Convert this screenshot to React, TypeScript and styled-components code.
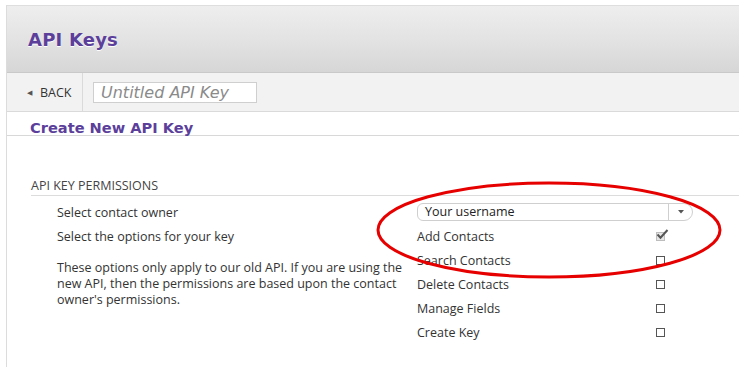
import { FC } from 'react';
import styled, { createGlobalStyle } from 'styled-components';

const GlobalStyle = createGlobalStyle`
	html, body {
		margin: 0;
		padding: 0;
		background: #fff;
		font-family: 'Open Sans', 'Liberation Sans', sans-serif;
		color: #333;
	}
`;

const leftRows = ['Select contact owner', 'Select the options for your key'];

const options = [
	{ label: 'Add Contacts', checked: true },
	{ label: 'Search Contacts', checked: false },
	{ label: 'Delete Contacts', checked: false },
	{ label: 'Manage Fields', checked: false },
	{ label: 'Create Key', checked: false },
];

const App: FC = () => {
	return (
		<>
			<GlobalStyle />
			<Frame>
				<Header>
					<Title>API Keys</Title>
				</Header>
				<Toolbar>
					<BackButton>
						<Caret>◀</Caret>
						BACK
					</BackButton>
					<KeyInput placeholder="Untitled API Key" />
				</Toolbar>
				<SectionTitle>Create New API Key</SectionTitle>
				<Permissions>
					<Heading>API Key Permissions</Heading>
					<Columns>
						<LeftColumn>
							{leftRows.map((row) => (
								<Row key={row}>{row}</Row>
							))}
							<Note>
								These options only apply to our old API. If you are using the new API, then the permissions are based upon the contact
								owner's permissions.
							</Note>
						</LeftColumn>
						<RightColumn>
							<Row>
								<Select>
									<SelectValue>Your username</SelectValue>
									<SelectArrow>
										<svg width="6" height="4" viewBox="0 0 6 4">
											<path d="M0 0h6L3 3.5z" fill="#555" />
										</svg>
									</SelectArrow>
								</Select>
							</Row>
							{options.map((option) => (
								<OptionRow key={option.label}>
									{option.label}
									<CheckBox $checked={option.checked}>
										{option.checked && (
											<svg width="13" height="11" viewBox="0 0 13 11">
												<path d="M1.5 5.5l3 3.2L11.5 1" fill="none" stroke="#555" strokeWidth="2" />
											</svg>
										)}
									</CheckBox>
								</OptionRow>
							))}
						</RightColumn>
					</Columns>
				</Permissions>
				<Highlight width="739" height="367" viewBox="0 0 739 367">
					<ellipse cx="549" cy="230" rx="171" ry="47" fill="none" stroke="#e60000" strokeWidth="3" />
				</Highlight>
			</Frame>
		</>
	);
};

const Frame = styled.div`
	position: relative;
	margin: 5px 0 0 6px;
	min-height: 362px;
	border-left: 1px solid #dcdcdc;
	box-sizing: border-box;
`;

const Header = styled.div`
	display: flex;
	align-items: center;
	height: 66px;
	padding-left: 21px;
	border-top: 1px solid #dedede;
	border-bottom: 1px solid #c9c9c9;
	background: linear-gradient(#eeeeee, #e2e2e2 55%, #d6d6d6);
`;

const Title = styled.h1`
	margin: 0;
	font-family: 'DejaVu Sans', sans-serif;
	font-weight: bold;
	font-size: 18px;
	letter-spacing: 0.2px;
	color: #5b3f9b;
	text-shadow: 0 1px 0 #fff;
`;

const Toolbar = styled.div`
	display: flex;
	align-items: center;
	height: 38px;
	background: #f2f2f2;
	border-bottom: 1px solid #dadada;
`;

const BackButton = styled.div`
	display: flex;
	align-items: center;
	gap: 8px;
	box-sizing: border-box;
	width: 76px;
	height: 100%;
	padding-left: 20px;
	border-right: 1px solid #dadada;
	font-size: 12.5px;
	color: #333;
`;

const Caret = styled.span`
	font-size: 7px;
	color: #555;
`;

const KeyInput = styled.input`
	box-sizing: border-box;
	width: 164px;
	height: 21px;
	margin-left: 10px;
	padding: 0 7px;
	border: 1px solid #cfcfcf;
	background: #fff;
	font-family: 'DejaVu Sans', sans-serif;
	font-style: italic;
	font-size: 16px;
	outline: none;

	&::placeholder {
		color: #8a8a8a;
	}
`;

const SectionTitle = styled.h2`
	margin: 0;
	height: 24px;
	box-sizing: border-box;
	padding: 7px 0 0 23px;
	border-bottom: 1px solid #d8d8d8;
	font-family: 'DejaVu Sans', sans-serif;
	font-weight: bold;
	font-size: 14.6px;
	line-height: 17px;
	color: #5b3f9b;
`;

const Permissions = styled.div`
	padding: 42px 0 0 24px;
`;

const Heading = styled.div`
	height: 17px;
	border-bottom: 1px solid #dcdcdc;
	font-size: 12.5px;
	line-height: 16px;
	text-transform: uppercase;
	color: #444;
`;

const Columns = styled.div`
	display: grid;
	grid-template-columns: 360px 276px;
	padding: 4px 0 0 26px;
`;

const LeftColumn = styled.div`
	display: flex;
	flex-direction: column;
`;

const RightColumn = styled.div`
	display: flex;
	flex-direction: column;
`;

const Row = styled.div`
	display: flex;
	align-items: center;
	height: 24px;
	font-size: 12.5px;
	color: #333;
`;

const OptionRow = styled(Row)`
	justify-content: space-between;
	padding-right: 28px;
`;

const Note = styled.p`
	max-width: 346px;
	margin: 12px 0 0;
	font-size: 12.5px;
	line-height: 16px;
	color: #333;
`;

const Select = styled.div`
	display: flex;
	align-items: stretch;
	box-sizing: border-box;
	width: 276px;
	height: 18px;
	border: 1px solid #cfcfcf;
	border-radius: 6px 9px 9px 6px;
	background: #fff;
`;

const SelectValue = styled.span`
	flex: 1;
	padding-left: 7px;
	font-size: 12.5px;
	line-height: 16px;
	color: #222;
`;

const SelectArrow = styled.span`
	display: flex;
	align-items: center;
	justify-content: center;
	width: 23px;
	border-left: 1px solid #cfcfcf;
`;

const CheckBox = styled.span<{ $checked: boolean }>`
	position: relative;
	display: flex;
	align-items: center;
	justify-content: center;
	box-sizing: border-box;
	width: 9px;
	height: 9px;
	border: 1px solid ${({ $checked }) => ($checked ? '#bdbdbd' : '#555')};
	background: ${({ $checked }) => ($checked ? '#e6e6e6' : '#fff')};

	svg {
		position: absolute;
		left: -1px;
		top: -4px;
	}
`;

const Highlight = styled.svg`
	position: absolute;
	top: -5px;
	left: -7px;
	pointer-events: none;
`;

export default App;
